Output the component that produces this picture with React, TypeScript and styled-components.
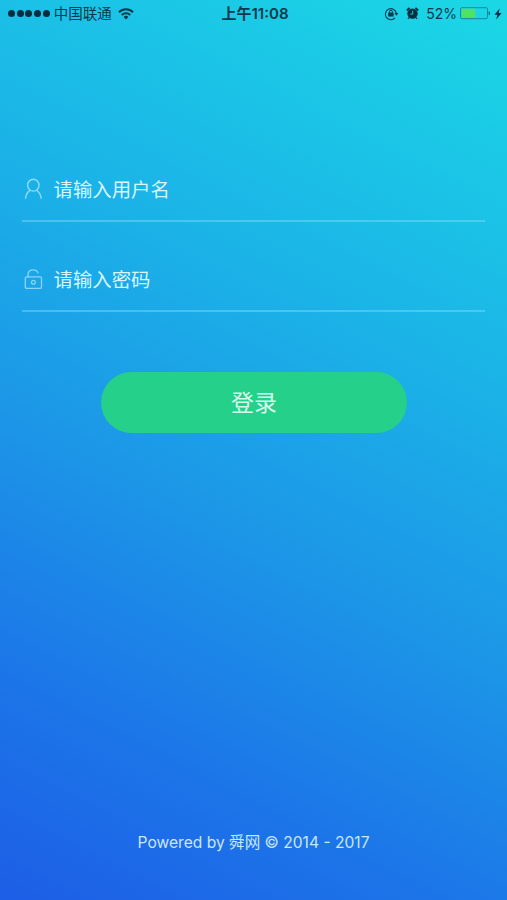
import React from "react";
import styled, { createGlobalStyle } from "styled-components";

const Global = createGlobalStyle`
  * { box-sizing: border-box; }
  body { margin: 0; }
`;

const Screen = styled.main`
  height: 900px;
  display: flex;
  flex-direction: column;
  overflow: hidden;
  color: #e0f6fe;
  font-family: Inter, "Noto Sans CJK SC", sans-serif;
  background: linear-gradient(207deg, #1bd8e5 0%, #1bb2e7 35%, #1c94e7 59%, #1c76e8 80%, #1d5ee6 100%);
`;

const StatusBar = styled.header`
  height: 27px;
  display: grid;
  grid-template-columns: 1fr auto 1fr;
  align-items: center;
  padding: 0 5px 0 8px;
  color: #07384c;
  font-size: 14.5px;
  line-height: 27px;
  white-space: nowrap;
`;

const StatusGroup = styled.div<{ $end?: boolean }>`
  display: flex;
  align-items: center;
  justify-content: ${(p) => (p.$end ? "flex-end" : "flex-start")};
`;

const Signal = styled.div`
  display: flex;
  gap: 1.6px;
  margin-right: 4px;
`;

const Dot = styled.i`
  width: 7.1px;
  height: 7.1px;
  border-radius: 50%;
  background: #052f40;
`;

const Clock = styled.time`
  font-size: 15px;
  font-weight: 600;
  color: #07394b;
`;

const Percent = styled.span`
  margin: 0 3px 0 7px;
  font-size: 14px;
`;

const Glyph = styled.svg<{ $gap?: number }>`
  display: block;
  flex: none;
  margin-left: ${(p) => p.$gap ?? 0}px;
`;

const Form = styled.form`
  padding: 130px 22px 0;
  display: flex;
  flex-direction: column;
`;

const Field = styled.label`
  height: 65px;
  display: flex;
  align-items: center;
  border-bottom: 2px solid rgba(144, 225, 250, 0.4);
  margin-bottom: 25px;
`;

const Input = styled.input`
  flex: 1;
  min-width: 0;
  padding: 0;
  margin-left: 10.5px;
  border: 0;
  outline: 0;
  background: none;
  color: inherit;
  font: 400 19.4px/30px "Noto Sans CJK SC", sans-serif;
  &::placeholder { color: #d9f5fe; opacity: 1; }
`;

const LoginButton = styled.button`
  width: 306px;
  height: 61px;
  margin: 35px 0 0 79px;
  padding: 0 0 3px;
  border: 0;
  border-radius: 31px;
  background: #24d08a;
  color: #d8f8ec;
  font: 400 23px/58px "Noto Sans CJK SC", sans-serif;
`;

const Footer = styled.footer`
  margin-top: auto;
  padding-bottom: 45px;
  text-align: center;
  font-size: 15.6px;
  line-height: 24px;
  color: #cbe6fc;
`;

const WifiIcon = () => (
  <Glyph $gap={6} width="16" height="12" viewBox="0 0 16 12" fill="none" stroke="#07384c" strokeWidth="2">
    <path d="M1 4.2a10 10 0 0 1 14 0M3.8 7a6 6 0 0 1 8.4 0" />
    <path d="M5.6 9a3.5 3.5 0 0 1 4.8 0L8 11.5z" fill="#07384c" stroke="none" />
  </Glyph>
);

const RotationLockIcon = () => (
  <Glyph width="15" height="14" viewBox="0 0 15 14" fill="none" stroke="#07384c">
    <path d="M11 10.8A5.5 5.5 0 1 1 12.3 6.5" strokeWidth="1.1" />
    <path d="M10.4 6.1h4l-2 2.6z" fill="#07384c" stroke="none" />
    <path d="M5.4 6V4.8a1.5 1.5 0 0 1 3 0V6" />
    <rect x="4.2" y="5.6" width="5.4" height="4" rx=".4" fill="#07384c" stroke="none" />
  </Glyph>
);

const AlarmIcon = () => (
  <Glyph $gap={7} width="13" height="13" viewBox="0 0 13 13" fill="none">
    <circle cx="6.5" cy="6.6" r="5.2" fill="#052f40" />
    <path d="M.8 3.5 3.6.9M12.2 3.5 9.4.9" stroke="#052f40" strokeWidth="1.8" />
    <path d="m3 10.6-1 1.3M10 10.6l1 1.3" stroke="#052f40" strokeWidth="1.3" />
    <path d="M6.7 3.7v3.4H4.4" stroke="#1bcce0" strokeWidth="1" />
  </Glyph>
);

const BatteryIcon = () => (
  <Glyph width="31" height="13" viewBox="0 0 31 13" fill="none">
    <rect x=".5" y=".7" width="27" height="11" rx="1.5" stroke="#1687a2" />
    <rect x="1.5" y="1.7" width="13.7" height="9" fill="#4fe268" />
    <path d="M28.7 4.2c1.7.5 1.7 3.6 0 4.1z" fill="#07506a" />
  </Glyph>
);

const BoltIcon = () => (
  <Glyph $gap={3} width="8" height="12" viewBox="0 0 8 12">
    <path d="M5.6.5.5 6.8h2.9L2.2 11.5 7.6 5H4.7z" fill="#052f40" />
  </Glyph>
);

const UserIcon = () => (
  <Glyph $gap={2} width="19" height="22" viewBox="0 0 19 22" fill="none" stroke="#8fdcf7" strokeWidth="1.4" strokeLinecap="round">
    <ellipse cx="9.3" cy="7.2" rx="5.7" ry="5.9" />
    <path d="M6 12.4C3.8 13.8 2 16.6 1.5 20.2M12.6 12.4c2.3 1.4 4 4.2 4.6 7.8" />
  </Glyph>
);

const LockIcon = () => (
  <Glyph $gap={2} width="19" height="22" viewBox="0 0 19 22" fill="none" stroke="#8bd4f6" strokeWidth="1.3" strokeLinecap="round">
    <rect x="1.3" y="8.9" width="16.2" height="11.4" rx="1.3" />
    <path d="M4 8.9V6.5C4 3.6 6.2 1.8 9 1.8c2.5 0 4.3 1 5 3" />
    <circle cx="9.4" cy="14.3" r="1.9" />
  </Glyph>
);

export default function App() {
  return (
    <Screen>
      <Global />
      <StatusBar>
        <StatusGroup>
          <Signal>{[0, 1, 2, 3, 4].map((n) => <Dot key={n} />)}</Signal>
          <span>中国联通</span>
          <WifiIcon />
        </StatusGroup>
        <Clock>上午11:08</Clock>
        <StatusGroup $end>
          <RotationLockIcon />
          <AlarmIcon />
          <Percent>52%</Percent>
          <BatteryIcon />
          <BoltIcon />
        </StatusGroup>
      </StatusBar>
      <Form>
        <Field>
          <UserIcon />
          <Input placeholder="请输入用户名" />
        </Field>
        <Field>
          <LockIcon />
          <Input type="password" placeholder="请输入密码" />
        </Field>
        <LoginButton type="button">登录</LoginButton>
      </Form>
      <Footer>Powered by 舜网 © 2014 - 2017</Footer>
    </Screen>
  );
}
